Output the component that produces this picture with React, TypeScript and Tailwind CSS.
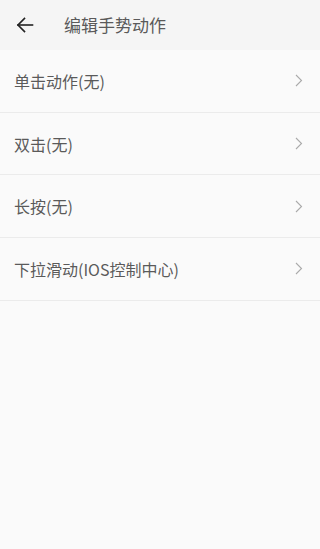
import React from 'react';

const items = ['单击动作(无)', '双击(无)', '长按(无)', '下拉滑动(IOS控制中心)'];

export default function App() {
  return (
    <div
      className="flex h-[549px] w-[320px] flex-col bg-[#fafafa]"
      style={{ fontFamily: '"Noto Sans CJK SC", Roboto, sans-serif' }}
    >
      <div className="flex h-[50px] items-center bg-[#f5f5f5]">
        <div className="flex w-[64px] pl-[16px]">
          <svg width="18" height="18" viewBox="0 0 18 18" fill="none" stroke="#222" strokeWidth="1.6" strokeLinecap="square">
            <path d="M2 9h14.5" />
            <path d="M8.5 2.5L2 9l6.5 6.5" />
          </svg>
        </div>
        <span className="text-[17px] text-[#5a5a5a]">编辑手势动作</span>
      </div>
      {items.map((t) => (
        <div key={t} className="flex h-[62.7px] items-center justify-between border-b-[1.5px] border-[#ebebeb] pl-[14px] pr-[17px]">
          <span className="text-[16px] text-[#5a5a5a]">{t}</span>
          <svg width="8" height="13" viewBox="0 0 8 13" fill="none" stroke="#aaa" strokeWidth="1.1">
            <path d="M1 1l5.5 5.5L1 12" />
          </svg>
        </div>
      ))}
    </div>
  );
}
